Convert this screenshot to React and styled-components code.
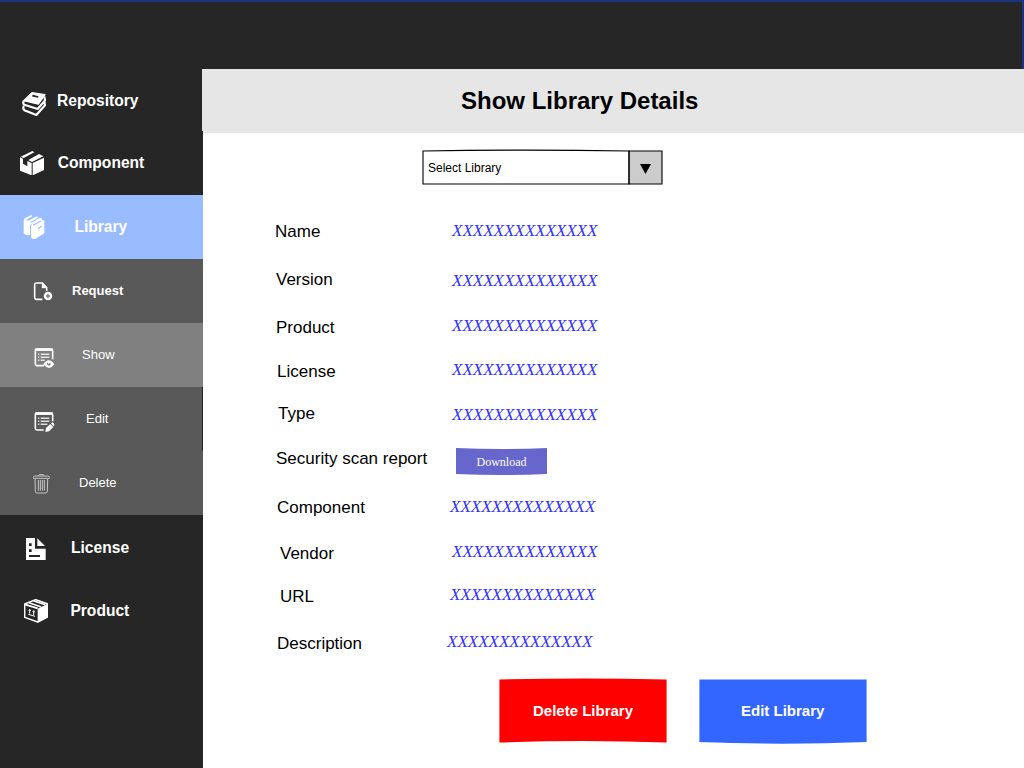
import React from "react";
import styled, { createGlobalStyle } from "styled-components";

const GlobalStyle = createGlobalStyle`
  * { box-sizing: border-box; }
  body { margin: 0; background: #fff; font-family: "Liberation Sans", Arial, sans-serif; }
  svg { display: block; }
  button { border: 0; padding: 0; background: none; cursor: pointer; font-family: inherit; }
`;

const Page = styled.div`
  width: 1024px;
  height: 768px;
  overflow: hidden;
  display: flex;
  flex-direction: column;
`;

const TopBar = styled.header`
  height: 69px;
  flex: none;
  background: #262626;
  border-top: 2px solid #1c3282;
  border-right: 2px solid #1c3282;
`;

const Body = styled.div`
  flex: 1;
  display: flex;
  min-height: 0;
`;

const Sidebar = styled.nav`
  width: 203px;
  flex: none;
  background: #262626;
`;

const NavItem = styled.a`
  display: flex;
  align-items: flex-start;
  height: ${(p) => p.$height || 64}px;
  background: ${(p) => p.$bg || "transparent"};
  border-right: ${(p) => (p.$edge ? "1px solid #262626" : "0")};
  color: #fff;
  cursor: pointer;
`;

const NavIcon = styled.span`
  flex: none;
  width: 24px;
  height: 24px;
  margin: ${(p) => p.$top}px 0 0 ${(p) => p.$left}px;
  opacity: ${(p) => p.$opacity || 1};
`;

const NavLabel = styled.span`
  margin: ${(p) => p.$top}px 0 0 ${(p) => p.$left}px;
  font-size: ${(p) => (p.$sub ? 13 : 15.6)}px;
  font-weight: ${(p) => (p.$bold ? 700 : 400)};
  line-height: ${(p) => (p.$sub ? 15 : 18)}px;
  white-space: nowrap;
`;

const Main = styled.main`
  flex: 1;
  min-width: 0;
  background: #fff;
`;

const TitleBar = styled.div`
  height: 64px;
  margin-left: -1px;
  padding: 18px 0 0 259px;
  background: #e6e6e6;
  clip-path: polygon(0 0, 100% 0, 100% 100%, 1px 100%, 1px 62px, 0 62px);
`;

const Title = styled.h1`
  margin: 0;
  font-size: 24px;
  line-height: 27px;
  color: #000;
`;

const Select = styled.div`
  display: grid;
  width: 242px;
  height: 37px;
  margin: 16px 0 0 219px;
  cursor: pointer;
`;

const SelectFrame = styled.svg`
  grid-area: 1 / 1;
`;

const SelectText = styled.span`
  grid-area: 1 / 1;
  padding: 12px 0 0 6px;
  font-size: 12px;
  line-height: 14px;
  color: #000;
`;

const Details = styled.dl`
  margin: 35px 0 0 71px;
`;

const Row = styled.div`
  display: flex;
  align-items: flex-start;
  height: ${(p) => p.$height}px;
`;

const Term = styled.dt`
  flex: none;
  width: 174px;
  padding: ${(p) => p.$top}px 0 0 ${(p) => p.$left}px;
  font-size: 17px;
  line-height: 19px;
  white-space: nowrap;
  color: #000;
`;

const Value = styled.dd`
  margin: ${(p) => p.$top}px 0 0 ${(p) => p.$left}px;
  font: italic 17px/19px "Liberation Serif", "Times New Roman", serif;
  color: #3333ff;
`;

const ShapeButton = styled.button`
  display: grid;
  width: ${(p) => p.$width}px;
  height: ${(p) => p.$height}px;
  color: #fff;
`;

const ButtonShape = styled.svg`
  grid-area: 1 / 1;
`;

const ButtonText = styled.span`
  grid-area: 1 / 1;
  padding-top: ${(p) => p.$top}px;
  padding-right: ${(p) => p.$right || 0}px;
  text-align: center;
  font: ${(p) => (p.$small ? '12px/14px "Liberation Serif", "Times New Roman", serif' : 'bold 15px/17px "Liberation Sans", Arial, sans-serif')};
`;

const DownloadSlot = styled.dd`
  margin: 0 0 0 8px;
`;

const Actions = styled.div`
  display: flex;
  gap: 32px;
  margin: -1px 0 0 296px;
`;

const icons = {
  repository: (
    <svg width="24" height="24" viewBox="0 0 72 72" fill="#fff">
      <path d="M30 2 69 8 49 36 5 26Z" stroke="#fff" strokeWidth="4" strokeLinejoin="round" />
      <path d="M31 11 49 15" stroke="#262626" strokeWidth="5" />
      <path d="M6 26Q1 34 7 38L47 51 69 25 67 13M6 42Q1 49 7 55L43 69 69 40 67 28" fill="none" stroke="#fff" strokeWidth="6.5" strokeLinejoin="round" />
    </svg>
  ),
  component: (
    <svg width="24" height="24" viewBox="0 0 72 72" fill="#fff">
      <path d="M0 19 9 23 9 38 22 46 22 30 35 36 35 73 0 59Z" />
      <path d="M38 36 72 20 72 57 38 73Z" />
      <path d="M2 17 37 0 43 4 11 21ZM25 27 57 9 70 16 36 33Z" />
    </svg>
  ),
  library: (
    <svg width="24" height="24" viewBox="0 0 72 72" fill="#fff">
      <path d="M2 18Q2 12 7 9L25 0 28 4 9 15 16 17 41 4 46 8 22 21 25 23 46 11 53 8 58 12 32 25Q22 27 21 33V59Q10 64 2 55Z" />
      <path d="M24 35Q24 27 30 24L53 11 64 18V55L38 71Q29 76 24 66Z" />
      <path d="M30 31 53 18M44 41 57 33" fill="none" stroke="#99bbff" strokeWidth="3.5" />
    </svg>
  ),
  request: (
    <svg width="24" height="24" viewBox="0 0 72 72" fill="none" stroke="#fff">
      <path d="M28 52H11Q5 52 5 46V9Q5 3 11 3H28L41 17V27" strokeWidth="4.8" />
      <path d="M27 2 42 18H27Z" fill="#fff" strokeWidth="1" />
      <circle cx="45" cy="42" r="9" strokeWidth="7.5" />
      <path d="M45 39V45M42 42H48" strokeWidth="1.5" opacity=".7" />
    </svg>
  ),
  show: (
    <svg width="24" height="24" viewBox="0 0 72 72" fill="none" stroke="#fff">
      <path d="M30 53H9Q4 53 4 48V6Q4 3 8 3H51Q56 3 56 8V34" strokeWidth="4.8" />
      <path d="M4 5H56" strokeWidth="7.5" />
      <path d="M12 19H16M20 19H46M12 28H16M20 28H46M12 37H16M20 37H32" strokeWidth="4.5" opacity=".8" />
      <path d="M28 49Q44 24 61 49 45 71 28 49Z" fill="#fff" stroke="none" />
      <path d="M39 43Q37 53 46 53Q52 50 49 44L44 48Z" fill="#808080" stroke="none" />
    </svg>
  ),
  edit: (
    <svg width="24" height="24" viewBox="0 0 72 72" fill="none" stroke="#fff">
      <path d="M29 54H9Q4 54 4 49V6Q4 3 8 3H51Q56 3 56 8V28" strokeWidth="4.8" />
      <path d="M4 5H56" strokeWidth="7.5" />
      <path d="M12 19H16M20 19H46M12 28H16M20 28H46M12 37H16M20 37H40" strokeWidth="4.5" opacity=".8" />
      <path d="M34 60 36 48 49 36 58 45 45 58ZM51 34 55 31Q62 34 61 39L59 43Z" fill="#fff" stroke="none" />
    </svg>
  ),
  delete: (
    <svg width="24" height="24" viewBox="0 0 72 72" fill="none" stroke="#fff">
      <path d="M1 10Q1 6 5 6H45Q49 6 49 10V13H1Z" strokeWidth="3" />
      <path d="M17 6 19 2H31L33 6M6 15 7 52Q7 57 12 57H38Q43 57 43 52L44 15" strokeWidth="3" />
      <path d="M16 18V50M22 18V50M28 18V50M34 18V50" strokeWidth="3" />
    </svg>
  ),
  license: (
    <svg width="24" height="24" viewBox="0 0 72 72" fill="#fff">
      <path fillRule="evenodd" d="M0 0H27V32H59V66H0ZM9 16V24H17V16ZM9 34V42H17V34ZM9 51V57H42V51Z" />
      <path d="M34 1 57 24H34Z" />
    </svg>
  ),
  product: (
    <svg width="24" height="24" viewBox="0 0 72 72" fill="#fff">
      <path d="M2 15 35 2 70 14V54L41 69 2 55Z" fill="none" stroke="#fff" strokeWidth="4.5" strokeLinejoin="round" />
      <path d="M41 29 72 14V55L41 71Z" />
      <path d="M2 16 41 28M15 11 52 24M28 5 64 17" fill="none" stroke="#fff" strokeWidth="5" />
      <path d="M17 44V31L14 35M17 31 20 36M29 48V35L26 38M29 35 32 40M13 46 33 52" fill="none" stroke="#fff" strokeWidth="3" />
    </svg>
  ),
};

const navItems = [
  { id: "repository", label: "Repository", height: 62, icon: [22.4, 23], text: [57, 23], bold: true },
  { id: "component", label: "Component", icon: [20, 20], text: [57.7, 23], bold: true },
  { id: "library", label: "Library", bg: "#99bbff", icon: [23, 20], text: [74.4, 23], bold: true },
  { id: "request", label: "Request", bg: "#595959", icon: [33, 23], text: [72, 24], bold: true, sub: true },
  { id: "show", label: "Show", bg: "#808080", icon: [33.5, 25], text: [82, 24], sub: true },
  { id: "edit", label: "Edit", bg: "#595959", icon: [33.5, 25], text: [86, 24], sub: true, edge: true },
  { id: "delete", label: "Delete", bg: "#595959", icon: [33, 23], text: [79, 24], sub: true, opacity: 0.65 },
  { id: "license", label: "License", icon: [26, 23], text: [71, 24], bold: true },
  { id: "product", label: "Product", icon: [24, 20], text: [70.4, 23], bold: true },
];

const placeholder = "XXXXXXXXXXXXXX";

const fields = [
  { label: "Name", height: 49, term: [1, 1], value: [4, 0] },
  { label: "Version", height: 46, term: [2, 0], value: [4, 1] },
  { label: "Product", height: 44, term: [2, 2], value: [4, 0] },
  { label: "License", height: 44, term: [3, 2], value: [4, 0] },
  { label: "Type", height: 44, term: [4, 0], value: [4, 1] },
  { label: "Security scan report", height: 49, term: [2, 1], download: true },
  { label: "Component", height: 45, term: [3, 1], value: [2, 0] },
  { label: "Vendor", height: 43, term: [6, 2], value: [4, 0] },
  { label: "URL", height: 47, term: [6, 2], value: [2, 0] },
  { label: "Description", height: 47, term: [3, 2], value: [-1, 0] },
];

export default function App() {
  return (
    <Page>
      <GlobalStyle />
      <TopBar />
      <Body>
        <Sidebar>
          {navItems.map((n) => (
            <NavItem key={n.id} $height={n.height} $bg={n.bg} $edge={n.edge}>
              <NavIcon $left={n.icon[0]} $top={n.icon[1]} $opacity={n.opacity}>{icons[n.id]}</NavIcon>
              <NavLabel $left={n.text[0] - n.icon[0] - 24} $top={n.text[1]} $bold={n.bold} $sub={n.sub}>
                {n.label}
              </NavLabel>
            </NavItem>
          ))}
        </Sidebar>
        <Main>
          <TitleBar>
            <Title>Show Library Details</Title>
          </TitleBar>
          <Select>
            <SelectFrame width="242" height="37" viewBox="0 0 242 37" fill="none" stroke="#000" strokeWidth="1.1">
              <path d="M207 2H240V35H207Z" fill="#ccc" />
              <path d="M1 2Q104 0.2 207 2V35H1Z" />
              <path d="M218 15H229L223.5 25Z" fill="#000" stroke="none" />
            </SelectFrame>
            <SelectText>Select Library</SelectText>
          </Select>
          <Details>
            {fields.map((f) => (
              <Row key={f.label} $height={f.height}>
                <Term $left={f.term[0]} $top={f.term[1]}>{f.label}</Term>
                {f.download ? (
                  <DownloadSlot>
                    <ShapeButton $width={91} $height={27}>
                      <ButtonShape width="91" height="27" viewBox="0 0 91 27">
                        <path d="M0 0Q45 2 91 0V26Q45 28 0 26Z" fill="#6666cc" />
                      </ButtonShape>
                      <ButtonText $small $top={7}>Download</ButtonText>
                    </ShapeButton>
                  </DownloadSlot>
                ) : (
                  <Value $left={f.value[0]} $top={f.value[1]}>{placeholder}</Value>
                )}
              </Row>
            ))}
          </Details>
          <Actions>
            <ShapeButton $width={168} $height={67}>
              <ButtonShape width="168" height="67" viewBox="0 0 168 67">
                <path d="M0.4 1.4Q84 -0.6 167.6 1.4V64.6Q84 61.4 0.4 64.6Z" fill="#f00" />
              </ButtonShape>
              <ButtonText $top={24}>Delete Library</ButtonText>
            </ShapeButton>
            <ShapeButton $width={168} $height={67}>
              <ButtonShape width="168" height="67" viewBox="0 0 168 67">
                <path d="M0.4 1.5H167.6V64Q84 67.4 0.4 64Z" fill="#36f" />
              </ButtonShape>
              <ButtonText $top={24} $right={0.6}>Edit Library</ButtonText>
            </ShapeButton>
          </Actions>
        </Main>
      </Body>
    </Page>
  );
}
